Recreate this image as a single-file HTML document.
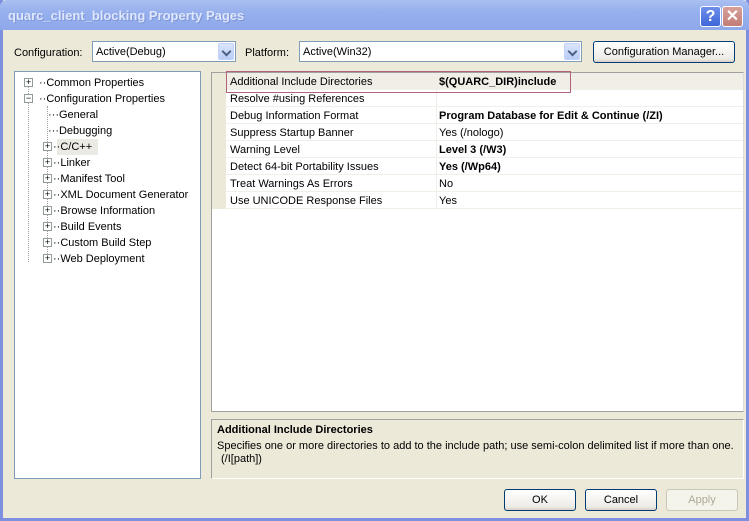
<!DOCTYPE html>
<html><head><style>
*{box-sizing:border-box;margin:0;padding:0}
body{width:749px;height:521px;overflow:hidden;font:11px "Liberation Sans",sans-serif;color:#000;background:#ece9d8;position:relative}
.a{position:absolute}
.frame{left:0;top:0;width:749px;height:521px;border:3px solid #7d90e0;border-top:none;background:#ece9d8}
.title{left:0;top:0;width:749px;height:30px;background:linear-gradient(#a9c0f0,#97b0ee 40%,#8ea8ea);border-radius:7px 7px 0 0}
.title span{position:absolute;left:8px;top:8px;font:bold 13px "Liberation Sans",sans-serif;color:#dfe7fb;text-shadow:1px 1px #7f95d6}
.tb{top:6px;width:21px;height:21px;border:1px solid #fff;border-radius:3px;color:#fff;font:bold 16px "Liberation Sans",sans-serif;text-align:center;line-height:19px}
.combo{height:21px;border:1px solid #7f9db9;background:#fff;padding:4px 3px 0}
.dd{position:absolute;right:1px;top:1px;width:16px;height:17px;background:linear-gradient(#dbe5fb,#b9cdf5);border-radius:2px;border:1px solid #c3d3fd}
.dd:after{content:"";position:absolute;left:4px;top:4px;width:5px;height:5px;border-right:2px solid #4d6185;border-bottom:2px solid #4d6185;transform:rotate(45deg)}
.btn{height:22px;border:1px solid #003c74;border-radius:3px;background:linear-gradient(#fff,#ecebe6 85%,#d6d0c5);text-align:center;line-height:21px}
.tree{left:14px;top:71px;width:187px;height:408px;border:1px solid #7f9db9;background:#fff}
.ti{position:absolute;height:16px;line-height:18px;white-space:nowrap}
.pm{position:absolute;width:9px;height:9px;border:1px solid #919b9c;background:#fff;font-size:9px;line-height:7px;text-align:center;color:#000}
.grid{left:211px;top:72px;width:533px;height:340px;border:1px solid #a0a0a0;border-right-color:#ddd;background:#fff;overflow:hidden}
.row{position:absolute;left:14px;width:517px;height:17px;border-bottom:1px solid #f0efe8;line-height:19px}
.row .n{position:absolute;left:4px}
.row .v{position:absolute;left:213px}
.b{font-weight:bold}
</style></head><body>
<div class="a frame"></div>
<div class="a title"><span>quarc_client_blocking Property Pages</span></div>
<div class="a tb" style="left:700px;background:linear-gradient(#6e8fea,#3e67d8)">?</div>
<div class="a tb" style="left:722px;background:linear-gradient(#d8a09a,#c27d76)">✕</div>

<div class="a" style="left:14px;top:47px">Configuration:</div>
<div class="a combo" style="left:92px;top:41px;width:144px">Active(Debug)<div class="dd"></div></div>
<div class="a" style="left:245px;top:47px">Platform:</div>
<div class="a combo" style="left:299px;top:41px;width:283px">Active(Win32)<div class="dd"></div></div>
<div class="a btn" style="left:593px;top:41px;width:142px">Configuration Manager...</div>

<div class="a tree">
<div class="a" style="left:13px;top:14px;width:0;height:176px;border-left:1px dotted #a0a0a0"></div>
<div class="a" style="left:32px;top:34px;width:0;height:152px;border-left:1px dotted #a0a0a0"></div>
<div class="pm" style="left:9px;top:6px">+</div><div class="ti" style="left:24px;top:2px">··Common Properties</div>
<div class="pm" style="left:9px;top:22px">−</div><div class="ti" style="left:24px;top:18px">··Configuration Properties</div>
<div class="ti" style="left:33px;top:34px">···General</div>
<div class="ti" style="left:33px;top:50px">···Debugging</div>
<div class="a" style="left:42px;top:67px;width:41px;height:16px;background:#ecebe3"></div>
<div class="pm" style="left:28px;top:70px">+</div><div class="ti" style="left:38px;top:66px">··C/C++</div>
<div class="pm" style="left:28px;top:86px">+</div><div class="ti" style="left:38px;top:82px">··Linker</div>
<div class="pm" style="left:28px;top:102px">+</div><div class="ti" style="left:38px;top:98px">··Manifest Tool</div>
<div class="pm" style="left:28px;top:118px">+</div><div class="ti" style="left:38px;top:114px">··XML Document Generator</div>
<div class="pm" style="left:28px;top:134px">+</div><div class="ti" style="left:38px;top:130px">··Browse Information</div>
<div class="pm" style="left:28px;top:150px">+</div><div class="ti" style="left:38px;top:146px">··Build Events</div>
<div class="pm" style="left:28px;top:166px">+</div><div class="ti" style="left:38px;top:162px">··Custom Build Step</div>
<div class="pm" style="left:28px;top:182px">+</div><div class="ti" style="left:38px;top:178px">··Web Deployment</div>
</div>

<div class="a grid">
<div class="a" style="left:0;top:0;width:14px;height:136px;background:#ece9d8"></div>
<div class="a" style="left:224px;top:0;width:1px;height:136px;background:#f0efe8"></div>
<div class="row" style="top:0;background:#f0eee6"><span class="n">Additional Include Directories</span><span class="v b">$(QUARC_DIR)include</span></div>
<div class="row" style="top:17px"><span class="n">Resolve #using References</span></div>
<div class="row" style="top:34px"><span class="n">Debug Information Format</span><span class="v b">Program Database for Edit &amp; Continue (/ZI)</span></div>
<div class="row" style="top:51px"><span class="n">Suppress Startup Banner</span><span class="v">Yes (/nologo)</span></div>
<div class="row" style="top:68px"><span class="n">Warning Level</span><span class="v b">Level 3 (/W3)</span></div>
<div class="row" style="top:85px"><span class="n">Detect 64-bit Portability Issues</span><span class="v b">Yes (/Wp64)</span></div>
<div class="row" style="top:102px"><span class="n">Treat Warnings As Errors</span><span class="v">No</span></div>
<div class="row" style="top:119px"><span class="n">Use UNICODE Response Files</span><span class="v">Yes</span></div>
</div>
<div class="a" style="left:226px;top:71px;width:345px;height:22px;border:1px solid #b0637a"></div>

<div class="a" style="left:211px;top:419px;width:533px;height:60px;border:1px solid #a0a0a0;border-right-color:#fff;border-bottom-color:#fff">
<div class="a b" style="left:5px;top:4px">Additional Include Directories</div>
<div class="a" style="left:5px;top:20px;white-space:nowrap">Specifies one or more directories to add to the include path; use semi-colon delimited list if more than one.</div>
<div class="a" style="left:9px;top:33px">(/I[path])</div>
</div>

<div class="a btn" style="left:504px;top:489px;width:72px">OK</div>
<div class="a btn" style="left:585px;top:489px;width:72px">Cancel</div>
<div class="a btn" style="left:666px;top:489px;width:72px;border-color:#c9c7ba;color:#aca899;background:#f5f4ea">Apply</div>
</body></html>
